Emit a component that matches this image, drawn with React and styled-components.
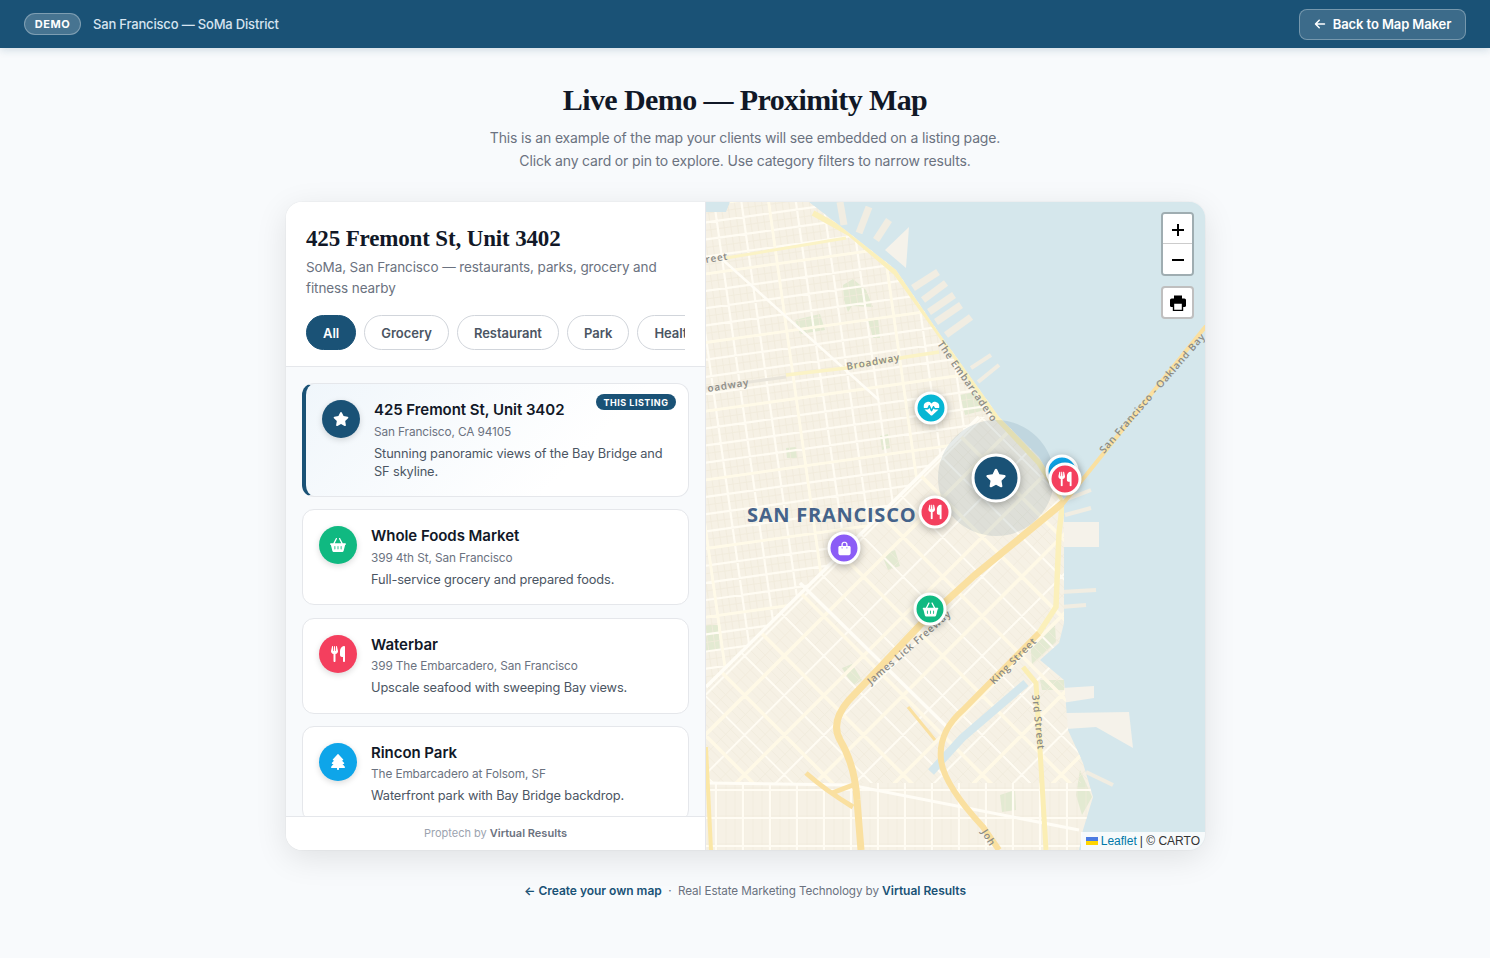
import React from 'react';
import styled, { createGlobalStyle } from 'styled-components';
import { FaStar, FaBasketShopping, FaUtensils, FaTree, FaHeartPulse, FaBagShopping, FaArrowLeft } from 'react-icons/fa6';

const SANS = `"Inter", "Noto Sans", sans-serif`;
const SERIF = `"Liberation Serif", "DejaVu Serif", serif`;

const Global = createGlobalStyle`
  html, body { margin: 0; padding: 0; background: #f8fafc; font-family: ${SANS}; }
  * { box-sizing: border-box; }
`;

const Page = styled.div`
  width: 1490px;
  height: 958px;
  overflow: hidden;
  background: #f8fafc;
`;
const TopBar = styled.header`
  height: 48px;
  background: #1a5276;
  padding: 0 24px;
  display: flex;
  align-items: center;
  justify-content: space-between;
  box-shadow: 0 2px 8px rgba(26, 82, 118, 0.18);
`;
const TopLeft = styled.div`
  display: flex;
  align-items: center;
  gap: 12px;
`;
const DemoPill = styled.span`
  width: 57px;
  height: 22px;
  border-radius: 11px;
  background: rgba(255, 255, 255, 0.2);
  border: 1px solid rgba(255, 255, 255, 0.3);
  color: #fff;
  font-size: 11px;
  font-weight: 700;
  letter-spacing: 0.5px;
  display: flex;
  align-items: center;
  justify-content: center;
`;
const Location = styled.span`
  color: #d6e4f0;
  font-size: 13px;
  font-weight: 500;
  letter-spacing: -0.18px;
`;
const BackButton = styled.a`
  width: 167px;
  height: 31px;
  border-radius: 8px;
  background: rgba(255, 255, 255, 0.15);
  border: 1px solid rgba(255, 255, 255, 0.3);
  color: #fff;
  font-size: 13px;
  font-weight: 600;
  letter-spacing: -0.1px;
  display: flex;
  align-items: center;
  justify-content: center;
  gap: 7px;
`;
const Hero = styled.section`
  padding-top: 33px;
  height: 154px;
  text-align: center;
`;
const HeroTitle = styled.h1`
  margin: 0 0 7px;
  font-family: ${SERIF};
  font-size: 30px;
  line-height: 38px;
  font-weight: 700;
  letter-spacing: -0.6px;
  color: #111827;
`;
const HeroText = styled.p`
  margin: 0;
  font-size: 14px;
  line-height: 23px;
  color: #6b7280;
  letter-spacing: -0.16px;
`;
const Frame = styled.main`
  width: 919px;
  height: 648px;
  margin-left: 286px;
  display: grid;
  grid-template-columns: 420px 1fr;
  border-radius: 16px;
  overflow: hidden;
  background: #fff;
  box-shadow: 0 8px 32px rgba(0, 0, 0, 0.1), 0 0 0 1px rgba(0, 0, 0, 0.02);
`;
const Sidebar = styled.aside`
  display: flex;
  flex-direction: column;
  height: 648px;
  min-height: 0;
  border-right: 1px solid #e5e7eb;
`;
const SideHead = styled.div`
  height: 165px;
  padding: 21px 20px 0 20px;
  border-bottom: 1px solid #e5e7eb;
  background: #fff;
  flex: none;
`;
const SideTitle = styled.h2`
  margin: 0 0 2px;
  font-family: ${SERIF};
  font-size: 23px;
  line-height: 32px;
  font-weight: 700;
  letter-spacing: -0.15px;
  color: #111827;
`;
const SideText = styled.p`
  margin: 0 0 16px;
  font-size: 13.5px;
  line-height: 21px;
  color: #6b7280;
  letter-spacing: -0.1px;
`;
const Chips = styled.div`
  display: flex;
  gap: 8px;
  overflow: hidden;
`;
const Chip = styled.span`
  flex: none;
  height: 35px;
  padding: 0 16px;
  border-radius: 18px;
  display: flex;
  align-items: center;
  font-size: 13px;
  font-weight: 600;
  letter-spacing: -0.02px;
  color: ${p => (p.$active ? '#fff' : '#4b5563')};
  background: ${p => (p.$active ? '#1a5276' : '#fff')};
  border: 1px solid ${p => (p.$active ? '#1a5276' : '#d1d5db')};
`;
const List = styled.div`
  flex: 1;
  min-height: 0;
  overflow: hidden;
  background: #f8fafc;
  padding: 16px 16px 0 16px;
  display: flex;
  flex-direction: column;
  gap: 12.4px;
`;
const Place = styled.article`
  position: relative;
  flex: none;
  height: ${p => (p.$featured ? '114px' : '96px')};
  padding: 16px;
  display: flex;
  gap: 14px;
  border-radius: 12px;
  border: 1px solid #e5e7eb;
  border-left: ${p => (p.$featured ? '4px solid #1a5276' : '1px solid #e5e7eb')};
  background: ${p => (p.$featured ? 'linear-gradient(135deg, #f0f6fb 0%, #fff 70%)' : '#fff')};
`;
const Badge = styled.span`
  position: absolute;
  top: 10px;
  right: 12px;
  width: 80px;
  height: 16px;
  border-radius: 8px;
  background: #1a5276;
  color: #fff;
  font-size: 9px;
  font-weight: 700;
  letter-spacing: 0.5px;
  display: flex;
  align-items: center;
  justify-content: center;
`;
const PlaceIcon = styled.div`
  flex: none;
  width: 38px;
  height: 38px;
  border-radius: 50%;
  background: ${p => p.$color};
  color: #fff;
  font-size: 16px;
  display: flex;
  align-items: center;
  justify-content: center;
  box-shadow: 0 2px 6px rgba(0, 0, 0, 0.15);
`;
const PlaceBody = styled.div`
  min-width: 0;
`;
const PlaceName = styled.div`
  font-size: 15px;
  line-height: 20px;
  font-weight: 600;
  color: #111827;
  letter-spacing: -0.05px;
`;
const PlaceAddr = styled.div`
  margin-top: ${p => (p.$featured ? '3px' : '2.2px')};
  font-size: 11.8px;
  line-height: 18px;
  color: #6b7280;
  letter-spacing: -0.1px;
`;
const PlaceDesc = styled.div`
  margin-top: 4px;
  font-size: 12.8px;
  line-height: 18px;
  color: #4b5563;
  letter-spacing: -0.12px;
`;
const SideFoot = styled.div`
  flex: none;
  height: 34px;
  background: #fff;
  border-top: 1px solid #e5e7eb;
  display: flex;
  align-items: center;
  justify-content: center;
  gap: 3px;
  font-size: 11px;
  line-height: 14px;
  padding-bottom: 1px;
  color: #9ca3af;
`;
const SideFootStrong = styled.strong`
  color: #6b7280;
  font-weight: 600;
`;
const MapPanel = styled.section`
  position: relative;
  overflow: hidden;
  background: #d5e7ec;
`;
const MapSvg = styled.svg`
  display: block;
  width: 100%;
  height: 100%;
`;
const MapLabel = styled.text`
  font-family: "Open Sans", sans-serif;
  font-size: 10px;
  font-weight: 600;
  letter-spacing: 0.75px;
  fill: #8b8b85;
`;
const CityLabel = styled.text`
  font-family: "Open Sans", sans-serif;
  font-size: 20px;
  font-weight: 700;
  letter-spacing: 0.75px;
  fill: #45638a;
`;
const Marker = styled.div`
  position: absolute;
  left: ${p => p.$x - 706}px;
  top: ${p => p.$y - 202}px;
  width: ${p => p.$size}px;
  height: ${p => p.$size}px;
  transform: translate(-50%, -50%);
  border-radius: 50%;
  border: 3px solid #fff;
  background: ${p => p.$color};
  color: #fff;
  font-size: ${p => p.$icon}px;
  display: flex;
  align-items: center;
  justify-content: center;
  box-shadow: 0 2px 8px rgba(0, 0, 0, 0.3);
`;
const ZoomGroup = styled.div`
  position: absolute;
  top: 10px;
  right: 11px;
  width: 33px;
  border: 2px solid rgba(0, 0, 0, 0.25);
  border-radius: 4px;
  background-clip: padding-box;
  overflow: hidden;
`;
const ZoomBtn = styled.div`
  height: 30px;
  padding-top: 2px;
  background: #fff;
  color: #000;
  display: flex;
  align-items: center;
  justify-content: center;
  border-bottom: ${p => (p.$first ? '1px solid #ccc' : 'none')};
`;
const PrintBtn = styled(ZoomGroup)`
  top: 84px;
  height: 33px;
  background: #fff;
  display: flex;
  align-items: center;
  justify-content: center;
`;
const Attribution = styled.div`
  position: absolute;
  right: 0;
  bottom: 0;
  height: 18px;
  padding: 0 5px;
  display: flex;
  align-items: center;
  gap: 3px;
  background: rgba(255, 255, 255, 0.8);
  font-family: "Liberation Sans", sans-serif;
  font-size: 12px;
  color: #333;
`;
const AttrLink = styled.span`
  color: #0078a8;
`;
const Foot = styled.footer`
  margin-top: 32px;
  display: flex;
  justify-content: center;
  align-items: center;
  font-size: 11.7px;
  letter-spacing: -0.1px;
  color: #6b7280;
  height: 17px;
`;
const FootLink = styled.span`
  color: #1a5276;
  font-size: 12px;
  letter-spacing: -0.02px;
  font-weight: 600;
`;
const FootDot = styled.span`
  margin: 0 6.5px;
`;

function gridPath(spacingA, spacingB, ox = 0, oy = 0) {
  let d = '';
  for (let x = -1400; x <= 2800; x += spacingA) d += `M${x + ox} -1400V2800`;
  for (let y = -1400; y <= 2800; y += spacingB) d += `M-1400 ${y + oy}H2800`;
  return d;
}

const LAND = '730,202 809,202 849,233 896,270 939,333 999,417 1039,457 1064,500 1064,623 1059,643 1040,660 1064,680 1068,730 1083,763 1093,797 1083,830 1079,850 706,850 706,212 726,212';
const P = pts => pts.map((p, i) => `${i ? 'L' : 'M'}${p[0]} ${p[1]}`).join('');

const PIERS = [
  [[840, 202], [844, 225]], [[869, 207], [859, 233]], [[889, 220], [876, 240]],
  [[938, 272], [913, 288]], [[946, 283], [923, 300]], [[954, 295], [929, 312]],
  [[961, 305], [936, 322]], [[971, 317], [946, 335]],
];
const THIN_PIERS = [
  [[991, 355], [971, 368]], [[999, 365], [978, 382]], [[1091, 490], [1065, 500]],
  [[1091, 508], [1065, 515]], [[1061, 592], [1096, 590]], [[1061, 607], [1086, 605]],
  [[1086, 772], [1113, 785]],
];
const PIER_SHAPES = [
  '909,227 906,268 885,250',
  '1060,522 1099,522 1099,547 1060,547',
  '1062,688 1094,686 1094,698 1062,703',
  '1066,713 1129,712 1133,748 1096,727 1066,729',
];
const PARKS = [
  '843,285 853,279 866,290 873,307 852,306 848,312 844,300',
  '868,320 878,318 880,338 873,338',
  '795,320 820,314 825,330 800,334',
  '960,395 975,392 985,410 965,415',
  '880,436 888,434 890,448 882,450',
  '786,448 796,447 797,458 787,458',
  '706,625 718,625 720,650 706,652',
  '882,555 895,550 900,566 888,570',
  '842,668 852,664 862,680 853,686',
  '1030,640 1055,625 1056,642 1032,664',
  '1040,680 1064,680 1064,690 1042,690',
  '1000,795 1015,790 1016,810 1002,812',
  '1080,770 1092,797 1082,815 1076,795',
];

function StreetMap() {
  return (
    <MapSvg viewBox="706 202 499 648">
      <defs>
        <clipPath id="land"><polygon points={LAND} /></clipPath>
        <clipPath id="north"><polygon points="706,202 1000,202 1000,417 979,417 706,687" /></clipPath>
        <clipPath id="south"><polygon points="706,687 979,417 1100,417 1100,783 706,783" /></clipPath>
        <clipPath id="lower"><polygon points="706,783 1100,783 1100,850 706,850" /></clipPath>
      </defs>
      <rect x="706" y="202" width="499" height="648" fill="#d5e7ec" />
      <g fill="none" strokeLinecap="butt">
        {PIERS.map((p, i) => <path key={i} d={P(p)} stroke="#f1ede2" strokeWidth="7" />)}
        {THIN_PIERS.map((p, i) => <path key={i} d={P(p)} stroke="#f1ede2" strokeWidth="4" />)}
      </g>
      {PIER_SHAPES.map((p, i) => <polygon key={i} points={p} fill="#f5f2ea" />)}
      <polygon points={LAND} fill="#f6f1e5" />
      <g clipPath="url(#land)" fill="none">
        {PARKS.map((p, i) => <polygon key={i} points={p} fill="#e3ead2" />)}
        <g clipPath="url(#north)">
          <g transform="rotate(-8 850 400)">
            <path d={gridPath(6.75, 17, 3, 14)} stroke="#f1ebdc" strokeWidth="0.8" />
            <path d={gridPath(27, 17, 10, 6)} stroke="#fffcf3" strokeWidth="2.2" />
            <path d={gridPath(108, 68, 37, 23)} stroke="#fffae8" strokeWidth="2.8" />
          </g>
        </g>
        <g clipPath="url(#south)">
          <g transform="rotate(-45 850 600)">
            <path d={gridPath(7, 28, 2, 19)} stroke="#f1ebdc" strokeWidth="0.8" />
            <path d={gridPath(28, 28, 8, 5)} stroke="#fffcf3" strokeWidth="2" />
            <path d={gridPath(56, 56, 36, 33)} stroke="#fff9e6" strokeWidth="3.6" />
          </g>
        </g>
        <g clipPath="url(#lower)">
          <path d={gridPath(9, 28, 2, 4)} stroke="#f1ebdc" strokeWidth="0.7" />
          <path d={gridPath(27, 28, 10, 790)} stroke="#fffcf3" strokeWidth="2.2" />
        </g>
        <path d={P([[931, 772], [962, 738], [1026, 683]])} stroke="#d5e7ec" strokeWidth="8" />
        <path d={P([[706, 687], [979, 417]])} stroke="#fffdf6" strokeWidth="3.5" />
        <path d={P([[723, 260], [879, 400]])} stroke="#fffdf6" strokeWidth="2.5" />
        <path d={P([[706, 783], [850, 785], [1079, 830]])} stroke="#fffdf6" strokeWidth="3" />
        <path d={P([[800, 583], [950, 730]])} stroke="#fffdf6" strokeWidth="3.5" />
        <path d="M726 258L846 238" stroke="#fbf3c6" strokeWidth="3" />
        <path d={P([[786, 375], [846, 368], [906, 357], [939, 352]])} stroke="#fbf3c6" strokeWidth="3.5" />
        <path d={P([[706, 388], [786, 377]])} stroke="#e8e4da" strokeWidth="3" />
        <path d={P([[813, 213], [849, 233], [896, 273], [939, 333], [999, 420], [1039, 463], [1063, 500], [1059, 533], [1056, 607], [1039, 633]])} stroke="#fbf0bb" strokeWidth="5.5" />
        <path d="M1039 633L963 710Q938 732 941 760Q944 785 983 827L999 850" stroke="#fae0a0" strokeWidth="6" />
        <path d={P([[1023, 667], [1036, 683], [1046, 850]])} stroke="#fbeeb4" strokeWidth="5" />
        <path d={P([[908, 707], [935, 740]])} stroke="#fae0a0" strokeWidth="3" />
        <path d="M1064 502L975 575L920 625L849 700Q830 722 840 740Q855 765 857 800L861 850" stroke="#fae0a0" strokeWidth="7" />
        <path d="M806 773Q825 790 853 807" stroke="#fae0a0" strokeWidth="5" />
        <path d={P([[832, 793], [853, 785]])} stroke="#fae0a0" strokeWidth="5" />
        <path d={P([[706, 747], [711, 850]])} stroke="#fbe7a6" strokeWidth="4" />
      </g>
      <path d={P([[1062, 505], [1206, 326]])} fill="none" stroke="#fae0a0" strokeWidth="4" />
      <circle cx="996" cy="478" r="58" fill="#1a5276" fillOpacity="0.11" />
      <CityLabel x="747" y="522">SAN FRANCISCO</CityLabel>
      <MapLabel x="706" y="263" transform="rotate(-9 706 263)">reet</MapLabel>
      <MapLabel x="708" y="392" transform="rotate(-9 708 392)">oadway</MapLabel>
      <MapLabel x="847" y="370" transform="rotate(-10 847 370)">Broadway</MapLabel>
      <MapLabel x="937" y="344" transform="rotate(55 937 344)">The Embarcadero</MapLabel>
      <MapLabel x="1104" y="454" transform="rotate(-49 1104 454)">San Francisco - Oakland Bay</MapLabel>
      <MapLabel x="871" y="685" transform="rotate(-41 871 685)">James Lick Freeway</MapLabel>
      <MapLabel x="994" y="685" transform="rotate(-45 994 685)">King Street</MapLabel>
      <MapLabel x="1032" y="695" transform="rotate(84 1032 695)">3rd Street</MapLabel>
      <MapLabel x="981" y="832" transform="rotate(58 981 832)">Joh</MapLabel>
    </MapSvg>
  );
}

const PLACES = [
  { name: 'Whole Foods Market', addr: '399 4th St, San Francisco', desc: 'Full-service grocery and prepared foods.', color: '#10b981', Icon: FaBasketShopping },
  { name: 'Waterbar', addr: '399 The Embarcadero, San Francisco', desc: 'Upscale seafood with sweeping Bay views.', color: '#f43f5e', Icon: FaUtensils },
  { name: 'Rincon Park', addr: 'The Embarcadero at Folsom, SF', desc: 'Waterfront park with Bay Bridge backdrop.', color: '#0ea5e9', Icon: FaTree },
];

const MARKERS = [
  { x: 931, y: 408, size: 33, icon: 16, color: '#06b6d4', Icon: FaHeartPulse },
  { x: 1062, y: 471, size: 33, icon: 15, color: '#0ea5e9', Icon: FaTree },
  { x: 1065, y: 479, size: 33, icon: 15, color: '#f43f5e', Icon: FaUtensils },
  { x: 935, y: 512, size: 33, icon: 15, color: '#f43f5e', Icon: FaUtensils },
  { x: 844, y: 548, size: 33, icon: 14, color: '#8b5cf6', Icon: FaBagShopping },
  { x: 930, y: 609, size: 33, icon: 16, color: '#10b981', Icon: FaBasketShopping },
  { x: 996, y: 478, size: 49, icon: 21, color: '#1a5276', Icon: FaStar },
];

export default function App() {
  return (
    <Page>
      <Global />
      <TopBar>
        <TopLeft>
          <DemoPill>DEMO</DemoPill>
          <Location>San Francisco — SoMa District</Location>
        </TopLeft>
        <BackButton><FaArrowLeft size={12} /> Back to Map Maker</BackButton>
      </TopBar>
      <Hero>
        <HeroTitle>Live Demo — Proximity Map</HeroTitle>
        <HeroText>This is an example of the map your clients will see embedded on a listing page.</HeroText>
        <HeroText>Click any card or pin to explore. Use category filters to narrow results.</HeroText>
      </Hero>
      <Frame>
        <Sidebar>
          <SideHead>
            <SideTitle>425 Fremont St, Unit 3402</SideTitle>
            <SideText>SoMa, San Francisco — restaurants, parks, grocery and<br />fitness nearby</SideText>
            <Chips>
              <Chip $active>All</Chip>
              <Chip>Grocery</Chip>
              <Chip>Restaurant</Chip>
              <Chip>Park</Chip>
              <Chip>Health</Chip>
            </Chips>
          </SideHead>
          <List>
            <Place $featured>
              <Badge>THIS LISTING</Badge>
              <PlaceIcon $color="#1a5276"><FaStar /></PlaceIcon>
              <PlaceBody>
                <PlaceName>425 Fremont St, Unit 3402</PlaceName>
                <PlaceAddr $featured>San Francisco, CA 94105</PlaceAddr>
                <PlaceDesc>Stunning panoramic views of the Bay Bridge and<br />SF skyline.</PlaceDesc>
              </PlaceBody>
            </Place>
            {PLACES.map(p => (
              <Place key={p.name}>
                <PlaceIcon $color={p.color}><p.Icon /></PlaceIcon>
                <PlaceBody>
                  <PlaceName>{p.name}</PlaceName>
                  <PlaceAddr>{p.addr}</PlaceAddr>
                  <PlaceDesc>{p.desc}</PlaceDesc>
                </PlaceBody>
              </Place>
            ))}
          </List>
          <SideFoot>Proptech by <SideFootStrong>Virtual Results</SideFootStrong></SideFoot>
        </Sidebar>
        <MapPanel>
          <StreetMap />
          {MARKERS.map(m => (
            <Marker key={`${m.x}-${m.y}`} $x={m.x} $y={m.y} $size={m.size} $icon={m.icon} $color={m.color}><m.Icon /></Marker>
          ))}
          <ZoomGroup>
            <ZoomBtn $first><svg width="14" height="14" viewBox="0 0 14 14"><path d="M7 1v12M1 7h12" stroke="#000" strokeWidth="2" /></svg></ZoomBtn>
            <ZoomBtn><svg width="14" height="14" viewBox="0 0 14 14"><path d="M1 7h12" stroke="#000" strokeWidth="2" /></svg></ZoomBtn>
          </ZoomGroup>
          <PrintBtn>
            <svg width="16" height="16" viewBox="0 0 16 16">
              <path d="M4 0.5h8v3.5H4z" fill="#000" />
              <rect x="0" y="3.5" width="16" height="8.5" rx="1.6" fill="#000" />
              <path d="M3.5 8h9v7.5h-9z" fill="#fff" stroke="#000" strokeWidth="1.4" />
            </svg>
          </PrintBtn>
          <Attribution>
            <svg width="12" height="8" viewBox="0 0 12 8"><rect width="12" height="4" fill="#4C7BE1" /><rect y="4" width="12" height="4" fill="#FFD500" /></svg>
            <AttrLink>Leaflet</AttrLink> | © CARTO
          </Attribution>
        </MapPanel>
      </Frame>
      <Foot>
        <FootLink>← Create your own map</FootLink>
        <FootDot>·</FootDot>
        Real Estate Marketing Technology by&nbsp;<FootLink>Virtual Results</FootLink>
      </Foot>
    </Page>
  );
}
